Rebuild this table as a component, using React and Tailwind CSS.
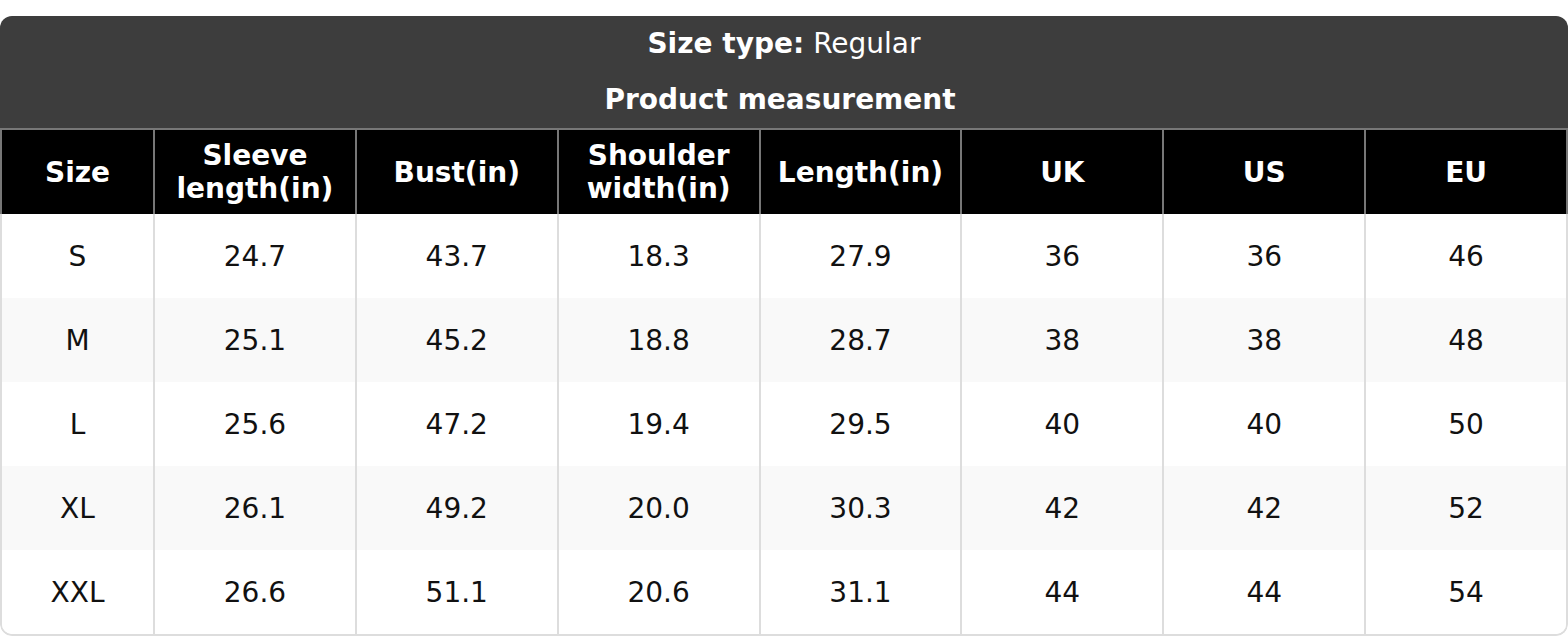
import React from "react";

const headers = ["Size", "Sleeve length(in)", "Bust(in)", "Shoulder width(in)", "Length(in)", "UK", "US", "EU"];

const rows = [
  ["S", "24.7", "43.7", "18.3", "27.9", "36", "36", "46"],
  ["M", "25.1", "45.2", "18.8", "28.7", "38", "38", "48"],
  ["L", "25.6", "47.2", "19.4", "29.5", "40", "40", "50"],
  ["XL", "26.1", "49.2", "20.0", "30.3", "42", "42", "52"],
  ["XXL", "26.6", "51.1", "20.6", "31.1", "44", "44", "54"],
];

const cols = "grid grid-cols-[151px_repeat(7,minmax(0,1fr))]";

export default function App() {
  return (
    <div className="bg-white pt-4 font-['DejaVu_Sans',sans-serif] text-[28px]">
      <div className="rounded-xl overflow-hidden">
        {/* Title */}
        <div className="bg-[#3d3d3d] text-white text-center">
          <div className="h-[56px] flex items-center justify-center leading-none">
            <span className="font-bold">Size type:</span>
            <span className="ml-[9px]">Regular</span>
          </div>
          <div className="h-[56px] flex items-center justify-center leading-none font-bold pr-[8px]">
            Product measurement
          </div>
        </div>

        {/* Column headers */}
        <div className={`${cols} bg-black text-white font-bold border-t-2 border-x-2 border-[#777]`}>
          {headers.map((h, i) => (
            <div
              key={h}
              className={`h-[84px] flex items-center justify-center text-center leading-[33px] px-2 ${i > 0 ? "border-l-2 border-[#777]" : ""}`}
            >
              {h === "Sleeve length(in)" ? (
                <span>Sleeve<br />length(in)</span>
              ) : h === "Shoulder width(in)" ? (
                <span>Shoulder<br />width(in)</span>
              ) : (
                h
              )}
            </div>
          ))}
        </div>

        {/* Body */}
        <div className="border-x-2 border-b-2 border-[#ddd] rounded-b-xl overflow-hidden text-[#111]">
          {rows.map((r, ri) => (
            <div key={r[0]} className={`${cols} ${ri % 2 === 1 ? "bg-[#f9f9f9]" : "bg-white"}`}>
              {r.map((v, i) => (
                <div
                  key={i}
                  className={`h-[84px] flex items-center justify-center pt-[2px] ${i > 0 ? "border-l-2 border-[#ddd]" : ""}`}
                >
                  {v}
                </div>
              ))}
            </div>
          ))}
        </div>
      </div>
    </div>
  );
}
